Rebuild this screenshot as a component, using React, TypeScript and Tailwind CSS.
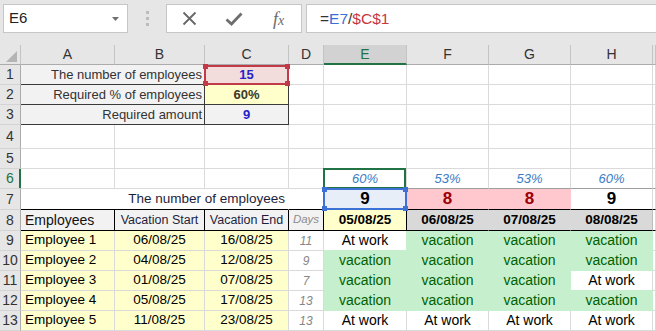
import type { ReactNode } from "react";

// column widths, measured off the sheet
const W: Record<string, string> = {
    A: "w-[94px]",
    B: "w-[90px]",
    C: "w-[84px]",
    D: "w-[35px]",
    E: "w-[83px]",
    F: "w-[82px]",
    G: "w-[82px]",
    H: "w-[82px]",
    I: "flex-1 min-w-0",
};

const GRID = "border-r-[#dadada]";
const GRID_B = "border-b-[#dadada]";
const DARK = "border-r-[#3a3a3a]";
const DARK_B = "border-b-[#3a3a3a]";

type CellProps = {
    w: string;
    r?: string;
    b?: string;
    className?: string;
    children?: ReactNode;
};

function Cell({ w, r = GRID, b = GRID_B, className = "", children }: CellProps) {
    return (
        <div
            className={`relative flex h-full shrink-0 items-center whitespace-nowrap border-r border-b ${w} ${r} ${b} ${className}`}
        >
            {children}
        </div>
    );
}

function Blank({ keys, b }: { keys: string[]; b?: string }) {
    return (
        <>
            {keys.map((k) => (
                <Cell key={k} w={W[k]} b={b} />
            ))}
        </>
    );
}

function Row({ n, h, active = false, children }: { n: number; h: string; active?: boolean; children: ReactNode }) {
    return (
        <div className={`flex ${h}`}>
            <div
                className={`relative flex h-full w-[21px] shrink-0 items-center justify-center border-r border-b border-r-[#ababab] border-b-[#d4d4d4] bg-[#e6e6e6] text-[14px] ${active ? "text-[#217346]" : "text-[#333]"}`}
            >
                {n}
                {active && <div className="absolute top-0 right-[-1px] bottom-0 w-[2px] bg-[#217346]" />}
            </div>
            {children}
        </div>
    );
}

function Handles({ color }: { color: string }) {
    return (
        <>
            <span className={`absolute -top-[3px] -left-[3px] h-[5px] w-[5px] ${color}`} />
            <span className={`absolute -top-[3px] -right-[3px] h-[5px] w-[5px] ${color}`} />
            <span className={`absolute -bottom-[3px] -left-[3px] h-[5px] w-[5px] ${color}`} />
            <span className={`absolute -right-[3px] -bottom-[3px] h-[5px] w-[5px] ${color}`} />
        </>
    );
}

function FormulaBar() {
    return (
        <div className="flex h-[45px] items-start bg-[#e6e6e6] pt-[4px] pl-[3px]">
            {/* Name box */}
            <div className="flex h-[29px] w-[125px] shrink-0 items-center justify-between border border-[#c6c6c6] bg-white pr-[8px] pl-[5px]">
                <span className="text-[15px] text-[#222]">E6</span>
                <svg width="7" height="4" viewBox="0 0 7 4">
                    <path d="M0 0h7L3.5 4z" fill="#707070" />
                </svg>
            </div>

            {/* Grip */}
            <div className="flex h-[29px] w-[38px] shrink-0 flex-col items-center justify-center gap-[3px]">
                <span className="h-[3px] w-[3px] bg-[#bcbcbc]" />
                <span className="h-[3px] w-[3px] bg-[#bcbcbc]" />
                <span className="h-[3px] w-[3px] bg-[#bcbcbc]" />
            </div>

            {/* Cancel / enter / function */}
            <div className="flex h-[29px] w-[136px] shrink-0 items-center border border-[#c6c6c6] bg-white">
                <div className="flex w-[45px] justify-center">
                    <svg width="15" height="15" viewBox="0 0 15 15">
                        <path d="M1.5 1.5l12 12M13.5 1.5l-12 12" stroke="#676767" strokeWidth="1.8" />
                    </svg>
                </div>
                <div className="flex w-[45px] justify-center">
                    <svg width="18" height="14" viewBox="0 0 18 14">
                        <path d="M1.5 7.5l5 4.5 10-10.5" stroke="#6e6e6e" strokeWidth="2.8" fill="none" />
                    </svg>
                </div>
                <div className="flex w-[45px] justify-center">
                    <span className="font-['Liberation_Serif',serif] text-[18px] leading-none text-[#6b6b6b] italic">
                        f<span className="text-[14px]">x</span>
                    </span>
                </div>
            </div>

            {/* Formula */}
            <div className="ml-[4px] flex h-[29px] flex-1 items-center border border-r-0 border-[#c6c6c6] bg-white pl-[13px] text-[15.5px]">
                <span className="text-[#333]">=</span>
                <span className="text-[#3b6fd6]">E7</span>
                <span className="text-[#333]">/</span>
                <span className="text-[#c8363f]">$C$1</span>
            </div>
        </div>
    );
}

type Status = "w" | "v";

const EMPLOYEES: { name: string; start: string; end: string; days: number; days4: Status[] }[] = [
    { name: "Employee 1", start: "06/08/25", end: "16/08/25", days: 11, days4: ["w", "v", "v", "v"] },
    { name: "Employee 2", start: "04/08/25", end: "12/08/25", days: 9, days4: ["v", "v", "v", "v"] },
    { name: "Employee 3", start: "01/08/25", end: "07/08/25", days: 7, days4: ["v", "v", "v", "w"] },
    { name: "Employee 4", start: "05/08/25", end: "17/08/25", days: 13, days4: ["v", "v", "v", "v"] },
    { name: "Employee 5", start: "11/08/25", end: "23/08/25", days: 13, days4: ["w", "w", "w", "w"] },
];

const DAY_COLS = ["E", "F", "G", "H"];

function StatusCell({ k, s, right, below }: { k: string; s: Status; right?: Status; below?: Status }) {
    const green = s === "v";
    // gridlines vanish next to a filled cell
    const r = green || right === "v" ? "border-r-[#c6efce]" : GRID;
    const b = green || below === "v" ? "border-b-[#c6efce]" : GRID_B;
    return (
        <Cell
            w={W[k]}
            r={r}
            b={b}
            className={`justify-center text-[14px] ${green ? "bg-[#c6efce] text-[#006100]" : "bg-white text-black"}`}
        >
            {green ? "vacation" : "At work"}
        </Cell>
    );
}

function Sheet() {
    return (
        <div>
            {/* Column headers */}
            <div className="flex h-[20px] bg-[#e6e6e6] text-[14px] text-[#333]">
                <div className="relative w-[21px] shrink-0 border-r border-b border-r-[#c4c4c4] border-b-[#ababab]">
                    <svg className="absolute right-[3px] bottom-[2px]" width="11" height="11" viewBox="0 0 11 11">
                        <path d="M11 0V11H0z" fill="#b4b4b4" />
                    </svg>
                </div>
                {["A", "B", "C", "D", "E", "F", "G", "H", "I"].map((k) =>
                    k === "E" ? (
                        <div
                            key={k}
                            className={`flex shrink-0 items-center justify-center border-r border-b-2 border-r-[#c4c4c4] border-b-[#217346] bg-[#d2d2d2] text-[#217346] ${W[k]}`}
                        >
                            {k}
                        </div>
                    ) : (
                        <div
                            key={k}
                            className={`flex shrink-0 items-center justify-center border-r border-b border-r-[#c4c4c4] border-b-[#ababab] ${W[k]}`}
                        >
                            {k === "I" ? "" : k}
                        </div>
                    )
                )}
            </div>

            {/* 1 */}
            <Row n={1} h="h-[20px]">
                <Cell w="w-[184px]" r={DARK} b={DARK_B} className="justify-end bg-[#f2f2f2] pr-[2px] text-[13px] text-[#333]">
                    The number of employees
                </Cell>
                <Cell w={W.C} r={DARK} b={DARK_B} className="justify-center bg-[#f2dcdc] text-[13px] font-bold text-[#2424c8]">
                    15
                    <div className="absolute top-0 -right-px -bottom-px -left-px z-10 border-2 border-[#c23a48]">
                        <Handles color="bg-[#c23a48]" />
                    </div>
                </Cell>
                <Blank keys={["D", "E", "F", "G", "H", "I"]} />
            </Row>

            {/* 2 */}
            <Row n={2} h="h-[20px]">
                <Cell w="w-[184px]" r={DARK} b={DARK_B} className="justify-end bg-[#f2f2f2] pr-[2px] text-[13px] text-[#333]">
                    Required % of employees
                </Cell>
                <Cell w={W.C} r={DARK} b={DARK_B} className="justify-center bg-[#ffffcc] text-[13px] font-bold text-[#3a3a2a]">
                    60%
                </Cell>
                <Blank keys={["D", "E", "F", "G", "H", "I"]} />
            </Row>

            {/* 3 */}
            <Row n={3} h="h-[20px]">
                <Cell w="w-[184px]" r={DARK} b={DARK_B} className="justify-end bg-[#f2f2f2] pr-[2px] text-[13px] text-[#333]">
                    Required amount
                </Cell>
                <Cell w={W.C} r={DARK} b={DARK_B} className="justify-center bg-[#f2f2f2] text-[13px] font-bold text-[#2424c8]">
                    9
                </Cell>
                <Blank keys={["D", "E", "F", "G", "H", "I"]} />
            </Row>

            {/* 4, 5 */}
            <Row n={4} h="h-[24px]">
                <Blank keys={["A", "B", "C", "D", "E", "F", "G", "H", "I"]} />
            </Row>
            <Row n={5} h="h-[20px]">
                <Blank keys={["A", "B", "C", "D", "E", "F", "G", "H", "I"]} />
            </Row>

            {/* 6: share of staff present */}
            <Row n={6} h="h-[20px]" active>
                <Blank keys={["A", "B", "C", "D"]} />
                {["60%", "53%", "53%", "60%"].map((p, i) => (
                    <Cell
                        key={i}
                        w={W[DAY_COLS[i]]}
                        b="border-b-[#9e9e9e]"
                        className="justify-center text-[13px] text-[#3a7cc4] italic"
                    >
                        {p}
                        {i === 0 && (
                            <div className="absolute -top-px right-0 -bottom-px -left-px z-10 border-2 border-[#217346]" />
                        )}
                    </Cell>
                ))}
                <Cell w={W.I} b="border-b-[#9e9e9e]" />
            </Row>

            {/* 7: head count per day */}
            <Row n={7} h="h-[21px]">
                <Cell w="w-[268px]" r="border-r-white" b="border-b-black" className="justify-end pr-[3px] text-[13.5px] text-[#1e1e3c]">
                    The number of employees
                </Cell>
                <Cell w={W.D} b="border-b-black" />
                <Cell w={W.E} b="border-b-black" className="justify-center bg-[#e8eef8] text-[17px] font-bold text-black">
                    9
                    <div className="absolute -top-px -right-px -bottom-px -left-px z-10 border-2 border-[#3c72d6]">
                        <Handles color="bg-[#3c72d6]" />
                    </div>
                </Cell>
                <Cell w={W.F} r="border-r-[#ffc7ce]" b="border-b-black" className="justify-center bg-[#ffc7ce] text-[17px] font-bold text-[#9c0006]">
                    8
                </Cell>
                <Cell w={W.G} r="border-r-[#ffc7ce]" b="border-b-black" className="justify-center bg-[#ffc7ce] text-[17px] font-bold text-[#9c0006]">
                    8
                </Cell>
                <Cell w={W.H} b="border-b-black" className="justify-center text-[17px] font-bold text-black">
                    9
                </Cell>
                <Cell w={W.I} b="border-b-black" />
            </Row>

            {/* 8: table header */}
            <Row n={8} h="h-[21px]">
                <Cell w={W.A} r="border-r-black" b="border-b-black" className="bg-[#f2f2f2] pl-[4px] text-[14px] text-[#111]">
                    Employees
                </Cell>
                <Cell w={W.B} r="border-r-black" b="border-b-black" className="justify-center bg-[#f2f2f2] text-[12.5px] text-[#1e1e3c]">
                    Vacation Start
                </Cell>
                <Cell w={W.C} r="border-r-black" b="border-b-black" className="justify-center bg-[#f2f2f2] text-[12.5px] text-[#1e1e3c]">
                    Vacation End
                </Cell>
                <Cell w={W.D} r="border-r-black" b="border-b-black" className="justify-center bg-[#f2f2f2] text-[11.5px] text-[#8c8c8c] italic">
                    Days
                </Cell>
                <Cell w={W.E} r="border-r-black" b="border-b-black" className="justify-center bg-[#ffffcc] text-[13.5px] font-bold text-black">
                    05/08/25
                </Cell>
                <Cell w={W.F} r="border-r-[#d9d9d9]" b="border-b-black" className="justify-center bg-[#d9d9d9] text-[13.5px] font-bold text-black">
                    06/08/25
                </Cell>
                <Cell w={W.G} r="border-r-[#d9d9d9]" b="border-b-black" className="justify-center bg-[#d9d9d9] text-[13.5px] font-bold text-black">
                    07/08/25
                </Cell>
                <Cell w={W.H} r="border-r-[#bdbdbd]" b="border-b-black" className="justify-center bg-[#d9d9d9] text-[13.5px] font-bold text-black">
                    08/08/25
                </Cell>
                <Cell w={W.I} b="border-b-black" />
            </Row>

            {/* 9-13: employees */}
            {EMPLOYEES.map((e, i) => (
                <Row key={e.name} n={9 + i} h="h-[20px]">
                    <Cell w={W.A} className="bg-[#ffffcc] pl-[4px] text-[13.5px] text-black">
                        {e.name}
                    </Cell>
                    <Cell w={W.B} className="justify-center bg-[#ffffcc] text-[13.5px] text-black">
                        {e.start}
                    </Cell>
                    <Cell w={W.C} className="justify-center bg-[#ffffcc] text-[13.5px] text-black">
                        {e.end}
                    </Cell>
                    <Cell w={W.D} className="justify-center text-[12px] text-[#868686] italic">
                        {e.days}
                    </Cell>
                    {e.days4.map((s, j) => (
                        <StatusCell
                            key={j}
                            k={DAY_COLS[j]}
                            s={s}
                            right={e.days4[j + 1]}
                            below={EMPLOYEES[i + 1]?.days4[j]}
                        />
                    ))}
                    <Cell w={W.I} />
                </Row>
            ))}
        </div>
    );
}

export default function App() {
    return (
        <div className="h-[331px] w-[656px] overflow-hidden bg-white font-['Liberation_Sans',Arial,sans-serif] select-none">
            <FormulaBar />
            <Sheet />
        </div>
    );
}
